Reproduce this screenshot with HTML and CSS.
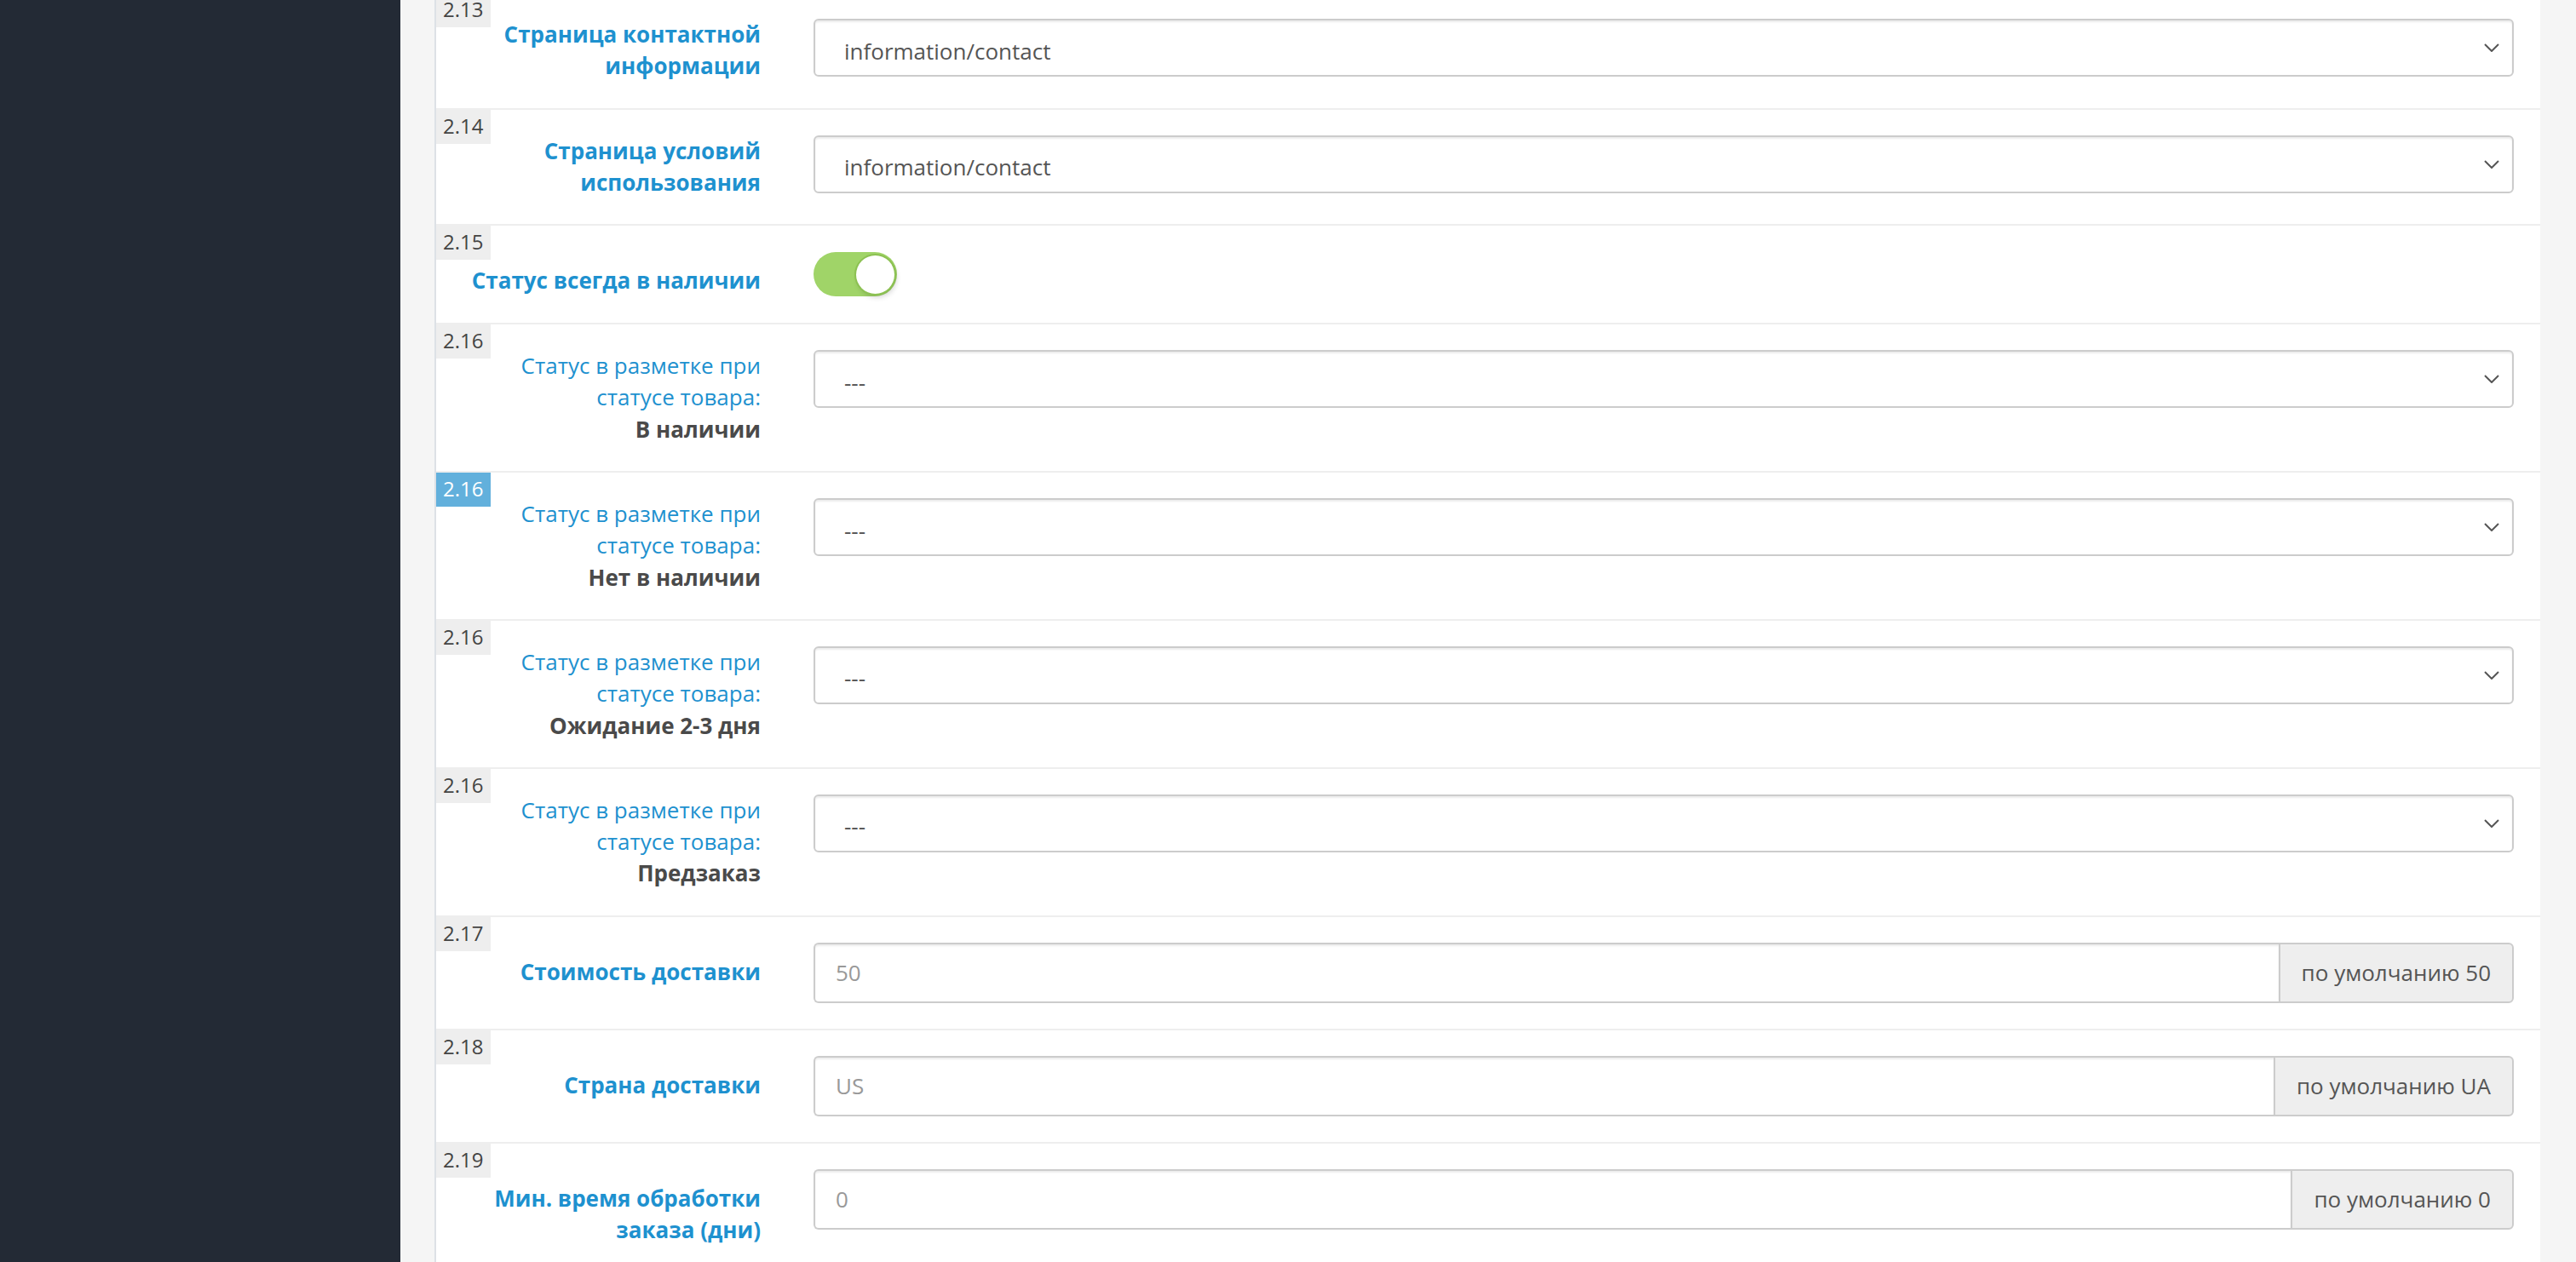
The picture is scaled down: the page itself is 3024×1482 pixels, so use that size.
FILE: index.html
```html
<!DOCTYPE html>
<html lang="ru">
<head>
  <meta charset="UTF-8">
  <title>Настройки разметки</title>
  <meta name="viewport" content="width=device-width, initial-scale=1">
  <link rel="stylesheet" href="styles.css">
</head>
<body>
  <aside class="sidebar"></aside>

  <main class="content">
    <div class="panel">

      <div class="form-group">
        <span class="num">2.13</span>
        <label class="control-label required">Страница контактной информации</label>
        <div class="field">
          <div class="select-wrap">
            <select><option>information/contact</option></select>
            <svg class="chevron" width="18" height="10" viewBox="0 0 18 10"><path d="M1 1 L9 9 L17 1"/></svg>
          </div>
        </div>
      </div>

      <div class="form-group">
        <span class="num">2.14</span>
        <label class="control-label required">Страница условий использования</label>
        <div class="field">
          <div class="select-wrap">
            <select><option>information/contact</option></select>
            <svg class="chevron" width="18" height="10" viewBox="0 0 18 10"><path d="M1 1 L9 9 L17 1"/></svg>
          </div>
        </div>
      </div>

      <div class="form-group">
        <span class="num">2.15</span>
        <label class="control-label required pad">Статус всегда в наличии</label>
        <div class="field">
          <div class="toggle on"><span class="knob"></span></div>
        </div>
      </div>

      <div class="form-group">
        <span class="num">2.16</span>
        <label class="control-label">Статус в разметке при статусе товара:<br><b>В наличии</b></label>
        <div class="field">
          <div class="select-wrap">
            <select><option>---</option></select>
            <svg class="chevron" width="18" height="10" viewBox="0 0 18 10"><path d="M1 1 L9 9 L17 1"/></svg>
          </div>
        </div>
      </div>

      <div class="form-group">
        <span class="num active">2.16</span>
        <label class="control-label">Статус в разметке при статусе товара:<br><b>Нет в наличии</b></label>
        <div class="field">
          <div class="select-wrap">
            <select><option>---</option></select>
            <svg class="chevron" width="18" height="10" viewBox="0 0 18 10"><path d="M1 1 L9 9 L17 1"/></svg>
          </div>
        </div>
      </div>

      <div class="form-group">
        <span class="num">2.16</span>
        <label class="control-label">Статус в разметке при статусе товара:<br><b>Ожидание 2-3 дня</b></label>
        <div class="field">
          <div class="select-wrap">
            <select><option>---</option></select>
            <svg class="chevron" width="18" height="10" viewBox="0 0 18 10"><path d="M1 1 L9 9 L17 1"/></svg>
          </div>
        </div>
      </div>

      <div class="form-group">
        <span class="num">2.16</span>
        <label class="control-label">Статус в разметке при статусе товара:<br><b>Предзаказ</b></label>
        <div class="field">
          <div class="select-wrap">
            <select><option>---</option></select>
            <svg class="chevron" width="18" height="10" viewBox="0 0 18 10"><path d="M1 1 L9 9 L17 1"/></svg>
          </div>
        </div>
      </div>

      <div class="form-group">
        <span class="num">2.17</span>
        <label class="control-label required pad">Стоимость доставки</label>
        <div class="field">
          <div class="input-group">
            <input type="text" placeholder="50">
            <span class="addon">по умолчанию 50</span>
          </div>
        </div>
      </div>

      <div class="form-group">
        <span class="num">2.18</span>
        <label class="control-label required pad">Страна доставки</label>
        <div class="field">
          <div class="input-group">
            <input type="text" placeholder="US">
            <span class="addon">по умолчанию UA</span>
          </div>
        </div>
      </div>

      <div class="form-group">
        <span class="num">2.19</span>
        <label class="control-label required pad">Мин. время обработки заказа (дни)</label>
        <div class="field">
          <div class="input-group">
            <input type="text" placeholder="0">
            <span class="addon">по умолчанию 0</span>
          </div>
        </div>
      </div>

    </div>
  </main>
</body>
</html>
```

FILE: styles.css
```css
* {
  box-sizing: border-box;
}

html, body {
  height: 100%;
}

body {
  margin: 0;
  display: flex;
  overflow: hidden;
  font-family: 'Open Sans', sans-serif;
  font-size: 26px;
  line-height: 37.3px;
  color: #555;
  background: #f5f5f5;
}

.sidebar {
  width: 470px;
  flex-shrink: 0;
  background: #232a35;
}

.content {
  flex: 1;
  padding: 0 42px 0 40px;
}

.panel {
  margin-top: -10px;
  min-height: calc(100% + 10px);
  background: #fff;
  border-left: 2px solid #dde1e6;
}

.form-group {
  position: relative;
  display: flex;
  align-items: flex-start;
  padding: 30px 31px 30px 0;
  border-top: 2px solid #eee;
}

.num {
  position: absolute;
  top: 0;
  left: 0;
  width: 64px;
  height: 40px;
  padding-left: 8px;
  background: #eee;
  color: #444;
  font-size: 24px;
  line-height: 38px;
}

.num.active {
  background: #62b0dc;
  color: #fff;
}

.control-label {
  width: 381px;
  flex-shrink: 0;
  padding-left: 30px;
  text-align: right;
  color: #1e91cf;
}

.control-label.required {
  font-weight: 700;
}

.control-label.pad {
  padding-top: 16px;
}

.control-label b {
  color: #4a4a4a;
}

.field {
  flex: 1;
  margin-left: 62px;
}

.select-wrap {
  position: relative;
}

select {
  display: block;
  width: 100%;
  height: 68px;
  padding: 7px 60px 0 34px;
  border: 2px solid #ccc;
  border-radius: 6px;
  background: #fff;
  box-shadow: inset 0 2px 2px rgba(0, 0, 0, 0.075);
  font-family: inherit;
  font-size: 26px;
  color: #555;
  -webkit-appearance: none;
  appearance: none;
  outline: none;
}

.chevron {
  position: absolute;
  top: 29px;
  right: 17px;
  fill: none;
  stroke: #555;
  stroke-width: 2;
  pointer-events: none;
}

.toggle {
  display: flex;
  justify-content: flex-end;
  align-items: center;
  width: 98px;
  height: 52px;
  margin: 1px 0;
  padding: 0 3px;
  border-radius: 26px;
  background: #a0d468;
}

.knob {
  width: 45px;
  height: 45px;
  border-radius: 50%;
  background: #fff;
  box-shadow: 0 0 0 2px #8cc152, 2px 4px 6px rgba(0, 0, 0, 0.18);
}

.input-group {
  display: flex;
  height: 71px;
}

.input-group input {
  flex: 1;
  min-width: 0;
  padding: 0 24px;
  border: 2px solid #ccc;
  border-right: none;
  border-radius: 6px 0 0 6px;
  box-shadow: inset 0 2px 2px rgba(0, 0, 0, 0.075);
  font-family: inherit;
  font-size: 26px;
  color: #555;
  outline: none;
}

.input-group input::placeholder {
  color: #999;
}

.addon {
  display: flex;
  align-items: center;
  padding: 0 25px;
  border: 2px solid #ccc;
  border-radius: 0 6px 6px 0;
  background: #eee;
  color: #555;
  white-space: nowrap;
}
```
